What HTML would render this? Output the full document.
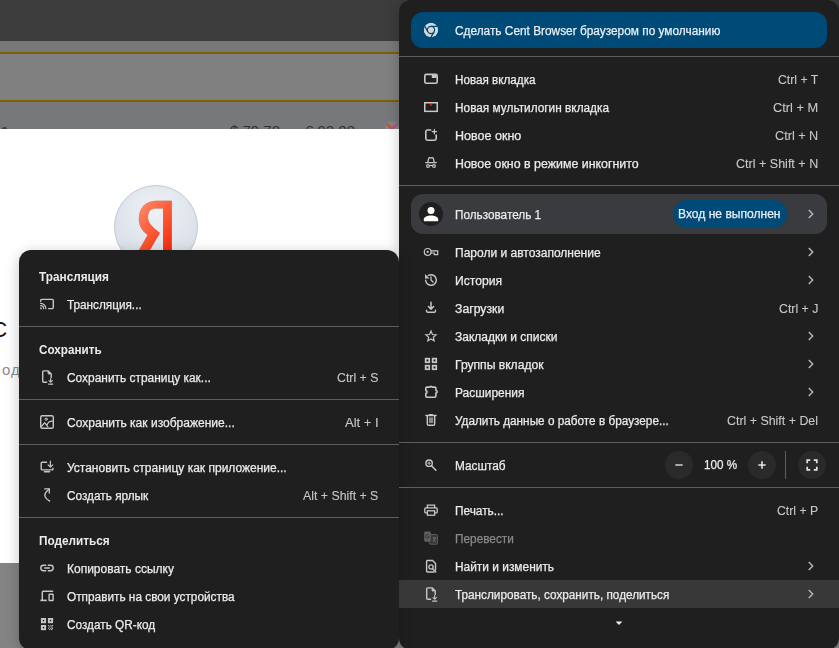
<!DOCTYPE html>
<html><head><meta charset="utf-8">
<style>
*{margin:0;padding:0;box-sizing:border-box}
html,body{width:839px;height:648px;overflow:hidden;background:#fff}
body{position:relative;font-family:"Liberation Sans",sans-serif;font-size:12px;color:#ebebeb}
.abs{position:absolute}
.t{position:absolute;white-space:nowrap;line-height:28px;height:28px;transform-origin:0 50%;-webkit-text-stroke:0.25px currentColor}
.sc{position:absolute;white-space:nowrap;line-height:28px;height:28px;text-align:right;color:#c7c7c7;transform-origin:100% 50%}
.b{font-weight:bold;-webkit-text-stroke:0}
.sep{position:absolute;height:1px;background:#5e5e5e}
.ic{position:absolute;width:16px;height:16px}
.ic svg{display:block}
</style></head><body>
<div class="abs" style="left:0;top:0;width:839px;height:41px;background:#3c3c3c"></div>
<div class="abs" style="left:0;top:41px;width:839px;height:88px;background:#77787a"></div>
<div class="abs" style="left:0;top:54px;width:839px;height:46px;background:#808080"></div>
<div class="abs" style="left:0;top:52px;width:839px;height:2px;background:#7f6000"></div>
<div class="abs" style="left:0;top:100px;width:839px;height:2px;background:#7f6000"></div>
<div class="abs" style="left:0;top:563px;width:839px;height:85px;background:#848484"></div>
<div class="abs" style="left:0;top:110px;width:399px;height:19px;overflow:hidden;font-size:15px;color:#303030;line-height:18px;white-space:nowrap"><span class="abs" style="left:230px;top:12px">$ 79.78</span><span class="abs" style="left:305px;top:12px">€ 92.88</span><span class="abs" style="left:385px;top:11px;width:14px;height:14px;border-radius:50%;background:#858585"></span><svg class="abs" style="left:386px;top:13px" width="12" height="12" viewBox="0 0 12 12"><path d="M1 1 L11 11" stroke="#d04a2a" stroke-width="2"/><path d="M11 1 L1 11" stroke="#c4438f" stroke-width="2"/></svg><span class="abs" style="left:1.5px;top:17.3px;width:5px;height:3px;border-radius:50%;background:#3a3a3a"></span></div>
<div class="abs" style="left:114px;top:185px;width:84px;height:84px;border-radius:50%;background:radial-gradient(circle at 50% 30%,#eef1f6 0%,#dfe4ec 55%,#d5dae4 100%);border:1px solid #c2c6d4"></div>
<svg class="abs" style="left:130px;top:195px;filter:drop-shadow(0.6px 0.6px 0.6px rgba(60,60,90,.35))" width="52" height="60" viewBox="0 0 52 60"><defs><linearGradient id="yg" x1="0.1" y1="0" x2="0.9" y2="1"><stop offset="0" stop-color="#ff8d6c"/><stop offset="0.55" stop-color="#fb5530"/><stop offset="1" stop-color="#f4280a"/></linearGradient></defs><path d="M41.8 5.7 V60 H33 V13.4 H25 C20.5 13.4 18 17 18 22 C18 27.5 21.5 31.5 29.9 37.9 L17.1 60 H6.1 L17.6 40 C11.5 35.5 8.8 30.5 8.8 23.8 C8.8 12.5 15.5 5.7 27 5.7 Z" fill="url(#yg)"/></svg>
<div class="abs" style="left:-9px;top:315px;font-size:22.5px;color:#111;line-height:30px">С</div>
<div class="abs" style="left:2px;top:361px;font-size:15px;color:#8c8c8c;line-height:18px;letter-spacing:1px">од</div>
<div class="abs" style="left:399px;top:0;width:440px;height:650px;background:#1f1f1f;border-radius:12px;box-shadow:0 3px 14px rgba(0,0,0,.24)"></div>
<div class="abs" style="left:19px;top:250px;width:380px;height:400px;background:#1f1f1f;border-radius:12px;box-shadow:0 3px 14px rgba(0,0,0,.24)"></div>
<div class="abs" style="left:411px;top:12px;width:416px;height:36px;border-radius:12px;background:#004a77"></div>
<div class="ic" style="left:423px;top:22px"><svg width="16" height="16" viewBox="0 0 16 16"><defs><clipPath id="cc"><circle cx="8" cy="8" r="7.3"/></clipPath></defs><g clip-path="url(#cc)"><circle cx="8" cy="8" r="7.3" fill="#d6d6d6" stroke="none"/><circle cx="8" cy="8" r="3.6" fill="none" stroke="#004a77" stroke-width="1.2"/><line x1="8.00" y1="4.40" x2="16.00" y2="4.40" stroke="#004a77" stroke-width="1.3"/><line x1="11.12" y1="9.80" x2="7.12" y2="16.73" stroke="#004a77" stroke-width="1.3"/><line x1="4.88" y1="9.80" x2="0.88" y2="2.87" stroke="#004a77" stroke-width="1.3"/></g></svg></div>
<div class="t" style="left:455px;top:17px;color:#e8eef3;transform:scaleX(0.9880);">Сделать Cent Browser браузером по умолчанию</div>
<div class="sep" style="left:399px;top:56px;width:440px"></div>
<div class="sep" style="left:399px;top:185px;width:440px"></div>
<div class="sep" style="left:399px;top:442px;width:440px"></div>
<div class="sep" style="left:399px;top:487px;width:440px"></div>
<div class="abs" style="left:411px;top:194px;width:416px;height:40px;border-radius:12px;background:#3a3b3f"></div>
<div class="abs" style="left:419px;top:202px;width:24px;height:24px"><svg width="24" height="24" viewBox="0 0 24 24"><circle cx="12" cy="12" r="12" fill="#1f1f1f"/><circle cx="12" cy="8.6" r="3.5" fill="#fff"/><path d="M4.8 19.2 V17.6 C4.8 14.9 8.6 13.6 12 13.6 C15.4 13.6 19.2 14.9 19.2 17.6 V19.2 Z" fill="#fff"/></svg></div>
<div class="t" style="left:455px;top:201px;transform:scaleX(0.9797);">Пользователь 1</div>
<div class="abs" style="left:672.5px;top:200px;width:114.5px;height:28px;border-radius:14px;background:#004a77"></div>
<div class="t" style="left:678px;top:200px;color:#e8eef3;transform:scaleX(1.0057);">Вход не выполнен</div>
<div class="ic" style="left:803px;top:205.5px"><svg width="16" height="16" viewBox="0 0 16 16" fill="none" stroke="#b4b4b4" stroke-width="1.5"><path d="M5.8 3.9 L9.7 8 L5.8 12.1"/></svg></div>
<div class="abs" style="left:399px;top:580px;width:440px;height:28px;background:#383838"></div>
<div class="ic" style="left:423px;top:71px"><svg width="16" height="16" viewBox="0 0 16 16" fill="none" stroke="#c7c7c7" stroke-width="1.4" stroke-linecap="round" stroke-linejoin="round" ><rect x="1.8" y="3.4" width="12.4" height="8.8" rx="1.5" stroke-width="1.6"/><rect x="8.8" y="4" width="4.8" height="3" fill="#c7c7c7" stroke="none"/></svg></div>
<div class="t" style="left:455px;top:66px;transform:scaleX(0.9740);">Новая вкладка</div>
<div class="t" style="left:778px;top:66px;color:#c7c7c7;-webkit-text-stroke:0.1px;transform:scaleX(1.0191);">Ctrl + T</div>
<div class="ic" style="left:423px;top:99px"><svg width="16" height="16" viewBox="0 0 16 16" fill="none" stroke="#c7c7c7" stroke-width="1.4" stroke-linecap="round" stroke-linejoin="round" ><rect x="1.75" y="3.75" width="12.5" height="8.6" stroke-width="1.5" stroke-linejoin="miter"/><rect x="7" y="5" width="2" height="2" fill="#ff0000" stroke="none"/></svg></div>
<div class="t" style="left:455px;top:94px;transform:scaleX(0.9862);">Новая мультилогин вкладка</div>
<div class="t" style="left:773px;top:94px;color:#c7c7c7;-webkit-text-stroke:0.1px;transform:scaleX(1.0683);">Ctrl + M</div>
<div class="ic" style="left:423px;top:127px"><svg width="16" height="16" viewBox="0 0 16 16" fill="none" stroke="#c7c7c7" stroke-width="1.4" stroke-linecap="round" stroke-linejoin="round" ><path d="M7.7 3 H4.4 A1.6 1.6 0 0 0 2.8 4.6 V11.6 A1.6 1.6 0 0 0 4.4 13.2 H11.6 A1.6 1.6 0 0 0 13.2 11.6 V8" stroke-width="1.6"/><path d="M11.4 2.4 V6.8 M9.2 4.6 H13.6" stroke-width="1.2"/></svg></div>
<div class="t" style="left:455px;top:122px;transform:scaleX(1.0444);">Новое окно</div>
<div class="t" style="left:775px;top:122px;color:#c7c7c7;-webkit-text-stroke:0.1px;transform:scaleX(1.0550);">Ctrl + N</div>
<div class="ic" style="left:423px;top:155px"><svg width="16" height="16" viewBox="0 0 16 16" fill="none" stroke="#c7c7c7" stroke-width="1.4" stroke-linecap="round" stroke-linejoin="round" ><path d="M2.7 7.6 H13.3" stroke-width="1.3"/><path d="M4.7 7.4 L5.8 3.2 Q6 2.5 6.8 2.7 L8 3.1 L9.2 2.7 Q10 2.5 10.2 3.2 L11.3 7.4" stroke-width="1.3"/><circle cx="5" cy="11.1" r="1.4" stroke-width="1.2"/><circle cx="11" cy="11.1" r="1.4" stroke-width="1.2"/><path d="M6.5 10.8 Q8 10 9.5 10.8" stroke-width="1.1"/></svg></div>
<div class="t" style="left:455px;top:150px;transform:scaleX(1.0328);">Новое окно в режиме инкогнито</div>
<div class="t" style="left:736px;top:150px;color:#c7c7c7;-webkit-text-stroke:0.1px;transform:scaleX(1.0444);">Ctrl + Shift + N</div>
<div class="ic" style="left:423px;top:244px"><svg width="16" height="16" viewBox="0 0 16 16" fill="none" stroke="#c7c7c7" stroke-width="1.4" stroke-linecap="round" stroke-linejoin="round" ><circle cx="4.7" cy="7.9" r="3.4" stroke-width="1.2"/><circle cx="4.7" cy="7.9" r="1.1" fill="#c7c7c7" stroke="none"/><path d="M8 6.8 H14.7 V10.7 H11.3 V9 H8" stroke-width="1.2" stroke-linejoin="miter"/></svg></div>
<div class="t" style="left:455px;top:239px;transform:scaleX(1.0007);">Пароли и автозаполнение</div>
<div class="ic" style="left:803px;top:244px"><svg width="16" height="16" viewBox="0 0 16 16" fill="none" stroke="#b4b4b4" stroke-width="1.5"><path d="M5.8 3.9 L9.7 8 L5.8 12.1"/></svg></div>
<div class="ic" style="left:423px;top:272px"><svg width="16" height="16" viewBox="0 0 16 16" fill="none" stroke="#c7c7c7" stroke-width="1.4" stroke-linecap="round" stroke-linejoin="round" ><path d="M5.35 3.41 A5.3 5.3 0 1 1 2.7 8.2" stroke-width="1.4"/><path d="M2 1.9 V6.5 H6.5 Z" fill="#c7c7c7" stroke="none"/><path d="M8 4.9 V8 L10 10" stroke-width="1.3"/></svg></div>
<div class="t" style="left:455px;top:267px;transform:scaleX(1.0098);">История</div>
<div class="ic" style="left:803px;top:272px"><svg width="16" height="16" viewBox="0 0 16 16" fill="none" stroke="#b4b4b4" stroke-width="1.5"><path d="M5.8 3.9 L9.7 8 L5.8 12.1"/></svg></div>
<div class="ic" style="left:423px;top:300px"><svg width="16" height="16" viewBox="0 0 16 16" fill="none" stroke="#c7c7c7" stroke-width="1.4" stroke-linecap="round" stroke-linejoin="round" ><path d="M8 2.2 V9 M5.4 6.5 L8 9.1 L10.6 6.5" stroke-width="1.5"/><path d="M3.5 10.2 V11 Q3.5 12.3 4.8 12.3 H11.2 Q12.5 12.3 12.5 11 V10.2" stroke-width="1.4"/></svg></div>
<div class="t" style="left:455px;top:295px;transform:scaleX(1.0189);">Загрузки</div>
<div class="t" style="left:779px;top:295px;color:#c7c7c7;-webkit-text-stroke:0.1px;transform:scaleX(1.0267);">Ctrl + J</div>
<div class="ic" style="left:423px;top:328px"><svg width="16" height="16" viewBox="0 0 16 16" fill="none" stroke="#c7c7c7" stroke-width="1.4" stroke-linecap="round" stroke-linejoin="round" ><path d="M8.00 3.10 L9.44 6.52 L13.14 6.83 L10.33 9.26 L11.17 12.87 L8.00 10.95 L4.83 12.87 L5.67 9.26 L2.86 6.83 L6.56 6.52 Z" stroke-width="1.2" stroke-linejoin="miter"/></svg></div>
<div class="t" style="left:455px;top:323px;transform:scaleX(0.9998);">Закладки и списки</div>
<div class="ic" style="left:803px;top:328px"><svg width="16" height="16" viewBox="0 0 16 16" fill="none" stroke="#b4b4b4" stroke-width="1.5"><path d="M5.8 3.9 L9.7 8 L5.8 12.1"/></svg></div>
<div class="ic" style="left:423px;top:356px"><svg width="16" height="16" viewBox="0 0 16 16" fill="none" stroke="#c7c7c7" stroke-width="1.4" stroke-linecap="round" stroke-linejoin="round" ><rect x="2.65" y="2.65" width="3.6" height="3.6" stroke-width="1.7" stroke-linejoin="miter"/><rect x="2.65" y="9.65" width="3.6" height="3.6" stroke-width="1.7" stroke-linejoin="miter"/><rect x="9.65" y="2.65" width="3.6" height="3.6" stroke-width="1.7" stroke-linejoin="miter"/><rect x="9.65" y="9.65" width="3.6" height="3.6" stroke-width="1.7" stroke-linejoin="miter"/></svg></div>
<div class="t" style="left:455px;top:351px;transform:scaleX(1.0097);">Группы вкладок</div>
<div class="ic" style="left:803px;top:356px"><svg width="16" height="16" viewBox="0 0 16 16" fill="none" stroke="#b4b4b4" stroke-width="1.5"><path d="M5.8 3.9 L9.7 8 L5.8 12.1"/></svg></div>
<div class="ic" style="left:423px;top:384px"><svg width="16" height="16" viewBox="0 0 16 16" fill="none" stroke="#c7c7c7" stroke-width="1.4" stroke-linecap="round" stroke-linejoin="round" ><path d="M2.8 4.3 Q2.8 3.1 4 3.1 H7.1 A0.9 0.9 0 0 1 8.9 3.1 H11.7 Q12.9 3.1 12.9 4.3 V6.5 A1.25 1.25 0 0 1 12.9 9 V12 Q12.9 13.2 11.7 13.2 H4 Q2.8 13.2 2.8 12 V9.2 A1.3 1.3 0 0 0 2.8 6.6 Z" stroke-width="1.6"/></svg></div>
<div class="t" style="left:455px;top:379px;transform:scaleX(0.9942);">Расширения</div>
<div class="ic" style="left:803px;top:384px"><svg width="16" height="16" viewBox="0 0 16 16" fill="none" stroke="#b4b4b4" stroke-width="1.5"><path d="M5.8 3.9 L9.7 8 L5.8 12.1"/></svg></div>
<div class="ic" style="left:423px;top:412px"><svg width="16" height="16" viewBox="0 0 16 16" fill="none" stroke="#c7c7c7" stroke-width="1.4" stroke-linecap="round" stroke-linejoin="round" ><path d="M2.9 3.5 H13.1" stroke-width="1.4"/><path d="M6.4 2.5 H9.6" stroke-width="1.2"/><path d="M4.3 3.8 V12 Q4.3 13.2 5.5 13.2 H10.5 Q11.7 13.2 11.7 12 V3.8" stroke-width="1.4"/><rect x="5.9" y="5.4" width="4.3" height="5.7" fill="#8a8a8a" stroke="none"/></svg></div>
<div class="t" style="left:455px;top:407px;transform:scaleX(0.9809);">Удалить данные о работе в браузере...</div>
<div class="t" style="left:727px;top:407px;color:#c7c7c7;-webkit-text-stroke:0.1px;transform:scaleX(1.0338);">Ctrl + Shift + Del</div>
<div class="ic" style="left:423px;top:457px"><svg width="16" height="16" viewBox="0 0 16 16" fill="none" stroke="#c7c7c7" stroke-width="1.4" stroke-linecap="round" stroke-linejoin="round" ><circle cx="6.1" cy="6.2" r="3.2" stroke-width="1.4"/><path d="M8.7 8.9 L12.9 13.3" stroke-width="1.5"/><path d="M6.1 4.9 V7.5 M4.8 6.2 H7.4" stroke-width="0.9"/></svg></div>
<div class="t" style="left:455px;top:452px;transform:scaleX(0.9848);">Масштаб</div>
<div class="ic" style="left:423px;top:502px"><svg width="16" height="16" viewBox="0 0 16 16" fill="none" stroke="#c7c7c7" stroke-width="1.4" stroke-linecap="round" stroke-linejoin="round" ><path d="M4.4 5.7 V3.1 H11.6 V5.7" stroke-width="1.3" stroke-linejoin="miter"/><path d="M4.2 10.9 H2.7 Q1.8 10.9 1.8 10 V6.8 Q1.8 5.9 2.7 5.9 H13.3 Q14.2 5.9 14.2 6.8 V10 Q14.2 10.9 13.3 10.9 H11.8" stroke-width="1.3"/><rect x="4.4" y="8.8" width="7.2" height="4.4" stroke-width="1.3" stroke-linejoin="miter"/></svg></div>
<div class="t" style="left:455px;top:497px;transform:scaleX(0.9865);">Печать...</div>
<div class="t" style="left:777px;top:497px;color:#c7c7c7;-webkit-text-stroke:0.1px;transform:scaleX(1.0189);">Ctrl + P</div>
<div class="ic" style="left:423px;top:530px"><svg width="16" height="16" viewBox="0 0 16 16"><rect x="6.4" y="4.5" width="8.1" height="9.7" rx="1.2" fill="#353535" stroke="#5a5a5a" stroke-width="1"/><path d="M9.4 7.8 H13.2 M11.3 6.8 V7.8 M12.6 7.9 Q12 10.4 9.6 12 M10.1 9.1 Q11 11 12.9 12" stroke="#7a7a7a" stroke-width="0.8" fill="none"/><rect x="1.2" y="1.4" width="6.6" height="10.3" rx="1.4" fill="#606060"/><path d="M5.9 5.1 A1.8 1.8 0 1 0 6.2 6.9 H4.6" fill="none" stroke="#2a2a2a" stroke-width="0.9"/></svg></div>
<div class="t" style="left:455px;top:525px;color:#8a8a8a;transform:scaleX(0.9847);">Перевести</div>
<div class="ic" style="left:423px;top:558px"><svg width="16" height="16" viewBox="0 0 16 16" fill="none" stroke="#c7c7c7" stroke-width="1.4" stroke-linecap="round" stroke-linejoin="round" ><path d="M12.5 12 V5.4 L9.6 2.5 H4.6 Q3.6 2.5 3.6 3.5 V13 Q3.6 14 4.6 14 H11" stroke-width="1.4"/><circle cx="8" cy="9" r="2.1" stroke-width="1.3"/><path d="M9.6 10.7 L12.8 14" stroke-width="1.4"/></svg></div>
<div class="t" style="left:455px;top:553px;transform:scaleX(0.9922);">Найти и изменить</div>
<div class="ic" style="left:803px;top:558px"><svg width="16" height="16" viewBox="0 0 16 16" fill="none" stroke="#b4b4b4" stroke-width="1.5"><path d="M5.8 3.9 L9.7 8 L5.8 12.1"/></svg></div>
<div class="ic" style="left:423px;top:586px"><svg width="16" height="16" viewBox="0 0 16 16" fill="none" stroke="#c7c7c7" stroke-width="1.4" stroke-linecap="round" stroke-linejoin="round" ><path d="M7.6 13.3 H4.8 Q3.7 13.3 3.7 12.2 V3 Q3.7 1.9 4.8 1.9 H9.2 L12.2 4.9 V8.4" stroke-width="1.4"/><path d="M9.1 2.2 V5 H11.9 Z" stroke-width="0.8" fill="#c7c7c7"/><path d="M11.7 9.6 V13 M10 11.6 L11.7 13.2 L13.4 11.6" stroke-width="1.1"/><path d="M9.6 15.1 H13.8" stroke-width="1.1"/></svg></div>
<div class="t" style="left:455px;top:581px;transform:scaleX(0.9804);">Транслировать, сохранить, поделиться</div>
<div class="ic" style="left:803px;top:586px"><svg width="16" height="16" viewBox="0 0 16 16" fill="none" stroke="#b4b4b4" stroke-width="1.5"><path d="M5.8 3.9 L9.7 8 L5.8 12.1"/></svg></div>
<div class="abs" style="left:665px;top:451px;width:28px;height:28px;border-radius:50%;background:#2a2a2a"></div>
<div class="abs" style="left:748px;top:451px;width:28px;height:28px;border-radius:50%;background:#2a2a2a"></div>
<div class="abs" style="left:798px;top:451px;width:28px;height:28px;border-radius:50%;background:#2a2a2a"></div>
<div class="abs" style="left:785px;top:451px;width:1px;height:28px;background:#5e5e5e"></div>
<div class="ic" style="left:671px;top:457px"><svg width="16" height="16" viewBox="0 0 16 16" fill="none" stroke="#c7c7c7" stroke-width="1.4" stroke-linecap="round" stroke-linejoin="round" ><path d="M4.3 8 H11.7" stroke="#c7c7c7" stroke-width="1.6" stroke-linecap="butt"/></svg></div>
<div class="ic" style="left:754px;top:457px"><svg width="16" height="16" viewBox="0 0 16 16" fill="none" stroke="#c7c7c7" stroke-width="1.4" stroke-linecap="round" stroke-linejoin="round" ><path d="M4.3 8 H11.7 M8 4.3 V11.7" stroke="#e3e3e3" stroke-width="1.6" stroke-linecap="butt"/></svg></div>
<div class="ic" style="left:804px;top:457px"><svg width="16" height="16" viewBox="0 0 16 16" fill="none" stroke="#c7c7c7" stroke-width="1.4" stroke-linecap="round" stroke-linejoin="round" ><path d="M3.2 6.2 V3.2 H6.2 M9.8 3.2 H12.8 V6.2 M12.8 9.8 V12.8 H9.8 M6.2 12.8 H3.2 V9.8" stroke="#e3e3e3" stroke-width="1.7" stroke-linecap="butt" stroke-linejoin="miter"/></svg></div>
<div class="t" style="left:704px;top:451px;transform:scaleX(0.9725);">100 %</div>
<svg class="abs" style="left:613px;top:619px" width="12" height="8" viewBox="0 0 12 8"><path d="M2.6 2.6 H9.4 L6 6.1 Z" fill="#ececec"/></svg>
<div class="sep" style="left:19px;top:326px;width:380px"></div>
<div class="sep" style="left:19px;top:399px;width:380px"></div>
<div class="sep" style="left:19px;top:444px;width:380px"></div>
<div class="sep" style="left:19px;top:517px;width:380px"></div>
<div class="t b" style="left:39px;top:263px;transform:scaleX(0.9833);">Трансляция</div>
<div class="ic" style="left:39px;top:296px"><svg width="16" height="16" viewBox="0 0 16 16" fill="none" stroke="#c7c7c7" stroke-width="1.4" stroke-linecap="round" stroke-linejoin="round" ><path d="M1.7 5.2 V4.4 Q1.7 3.4 2.7 3.4 H13.3 Q14.3 3.4 14.3 4.4 V11.6 Q14.3 12.6 13.3 12.6 H9.6" stroke-width="1.4"/><path d="M1.5 12.7 V11.6 A1.1 1.1 0 0 1 2.6 12.7 Z" fill="#c7c7c7" stroke-width="0.6"/><path d="M1.6 9.6 A3.1 3.1 0 0 1 4.7 12.7 M1.6 7.4 A5.3 5.3 0 0 1 6.9 12.7" stroke-width="1.2"/></svg></div>
<div class="t" style="left:67px;top:291px;transform:scaleX(0.9797);">Трансляция...</div>
<div class="t b" style="left:39px;top:336px;transform:scaleX(0.9757);">Сохранить</div>
<div class="ic" style="left:39px;top:369px"><svg width="16" height="16" viewBox="0 0 16 16" fill="none" stroke="#c7c7c7" stroke-width="1.4" stroke-linecap="round" stroke-linejoin="round" ><path d="M7.6 13.3 H4.8 Q3.7 13.3 3.7 12.2 V3 Q3.7 1.9 4.8 1.9 H9.2 L12.2 4.9 V8.4" stroke-width="1.4"/><path d="M9.1 2.2 V5 H11.9 Z" stroke-width="0.8" fill="#c7c7c7"/><path d="M11.7 9.6 V13 M10 11.6 L11.7 13.2 L13.4 11.6" stroke-width="1.1"/><path d="M9.6 15.1 H13.8" stroke-width="1.1"/></svg></div>
<div class="t" style="left:67px;top:364px;transform:scaleX(0.9929);">Сохранить страницу как...</div>
<div class="t" style="left:337px;top:364px;color:#c7c7c7;-webkit-text-stroke:0.1px;transform:scaleX(1.0264);">Ctrl + S</div>
<div class="ic" style="left:39px;top:414px"><svg width="16" height="16" viewBox="0 0 16 16" fill="none" stroke="#c7c7c7" stroke-width="1.4" stroke-linecap="round" stroke-linejoin="round" ><rect x="1.7" y="1.7" width="12.6" height="12.6" rx="1.6" stroke-width="1.4"/><circle cx="7.1" cy="5.2" r="1.15" stroke-width="1"/><path d="M2.5 12.5 L5.6 8.7 L8.8 12.6 M8 11 Q9.3 7 13.5 7.1" stroke-width="1.2"/></svg></div>
<div class="t" style="left:67px;top:409px;transform:scaleX(1.0021);">Сохранить как изображение...</div>
<div class="t" style="left:345px;top:409px;color:#c7c7c7;-webkit-text-stroke:0.1px;transform:scaleX(1.0879);">Alt + I</div>
<div class="ic" style="left:39px;top:459px"><svg width="16" height="16" viewBox="0 0 16 16" fill="none" stroke="#c7c7c7" stroke-width="1.4" stroke-linecap="round" stroke-linejoin="round" ><path d="M7.6 3.2 H3.2 Q2.2 3.2 2.2 4.2 V9.9 Q2.2 10.9 3.2 10.9 H13 Q14 10.9 14 9.9 V9.3" stroke-width="1.4"/><path d="M5.4 12.7 H10.6" stroke-width="1.4"/><path d="M11.4 2.2 V8 M9.1 5.9 L11.4 8.1 L13.7 5.9" stroke-width="1.2"/></svg></div>
<div class="t" style="left:67px;top:454px;transform:scaleX(0.9999);">Установить страницу как приложение...</div>
<div class="ic" style="left:39px;top:487px"><svg width="16" height="16" viewBox="0 0 16 16" fill="none" stroke="#c7c7c7" stroke-width="1.4" stroke-linecap="round" stroke-linejoin="round" ><path d="M10.1 2.2 Q5 6 6 9.4 Q6.9 12.2 10.6 14" stroke-width="1.4"/><path d="M5.8 1.9 H10.3 V6" stroke-width="1.3" stroke-linejoin="miter"/></svg></div>
<div class="t" style="left:67px;top:482px;transform:scaleX(0.9840);">Создать ярлык</div>
<div class="t" style="left:303px;top:482px;color:#c7c7c7;-webkit-text-stroke:0.1px;transform:scaleX(1.0264);">Alt + Shift + S</div>
<div class="t b" style="left:39px;top:527px;transform:scaleX(0.9811);">Поделиться</div>
<div class="ic" style="left:39px;top:560px"><svg width="16" height="16" viewBox="0 0 16 16" fill="none" stroke="#c7c7c7" stroke-width="1.4" stroke-linecap="round" stroke-linejoin="round" ><path d="M6.7 5.3 H4.5 A2.7 2.7 0 0 0 4.5 10.7 H6.7 M9.3 5.3 H11.5 A2.7 2.7 0 0 1 11.5 10.7 H9.3 M5.7 8 H10.3" stroke-width="1.4"/></svg></div>
<div class="t" style="left:67px;top:555px;transform:scaleX(1.0002);">Копировать ссылку</div>
<div class="ic" style="left:39px;top:588px"><svg width="16" height="16" viewBox="0 0 16 16" fill="none" stroke="#c7c7c7" stroke-width="1.4" stroke-linecap="round" stroke-linejoin="round" ><path d="M3.3 12.3 V4.2 Q3.3 3.3 4.2 3.3 H13.6" stroke-width="1.4"/><path d="M1.4 12.4 H7.8" stroke-width="1.6" stroke-linecap="butt"/><rect x="10.1" y="6.2" width="4" height="6.3" rx="0.5" stroke-width="1.4"/></svg></div>
<div class="t" style="left:67px;top:583px;transform:scaleX(0.9844);">Отправить на свои устройства</div>
<div class="ic" style="left:39px;top:616px"><svg width="16" height="16" viewBox="0 0 16 16" fill="none" stroke="#c7c7c7" stroke-width="1.4" stroke-linecap="round" stroke-linejoin="round" ><rect x="2.8499999999999996" y="2.95" width="3.3" height="3.3" stroke-width="1.9" stroke-linejoin="miter"/><rect x="9.85" y="2.95" width="3.3" height="3.3" stroke-width="1.9" stroke-linejoin="miter"/><rect x="2.8499999999999996" y="9.95" width="3.3" height="3.3" stroke-width="1.9" stroke-linejoin="miter"/><rect x="9" y="9.1" width="1.1" height="1.1" fill="#c7c7c7" stroke="none"/><rect x="11.4" y="9.1" width="1.1" height="1.1" fill="#c7c7c7" stroke="none"/><rect x="13" y="9.1" width="1.1" height="1.1" fill="#c7c7c7" stroke="none"/><rect x="10.2" y="10.4" width="1.1" height="1.1" fill="#c7c7c7" stroke="none"/><rect x="12.2" y="10.4" width="1.1" height="1.1" fill="#c7c7c7" stroke="none"/><rect x="9" y="11.7" width="1.1" height="1.1" fill="#c7c7c7" stroke="none"/><rect x="11.4" y="11.7" width="1.1" height="1.1" fill="#c7c7c7" stroke="none"/><rect x="13" y="11.7" width="1.1" height="1.1" fill="#c7c7c7" stroke="none"/><rect x="10.2" y="13" width="1.1" height="1.1" fill="#c7c7c7" stroke="none"/><rect x="12.2" y="13" width="1.1" height="1.1" fill="#c7c7c7" stroke="none"/></svg></div>
<div class="t" style="left:67px;top:611px;transform:scaleX(0.9821);">Создать QR-код</div>
</body></html>
